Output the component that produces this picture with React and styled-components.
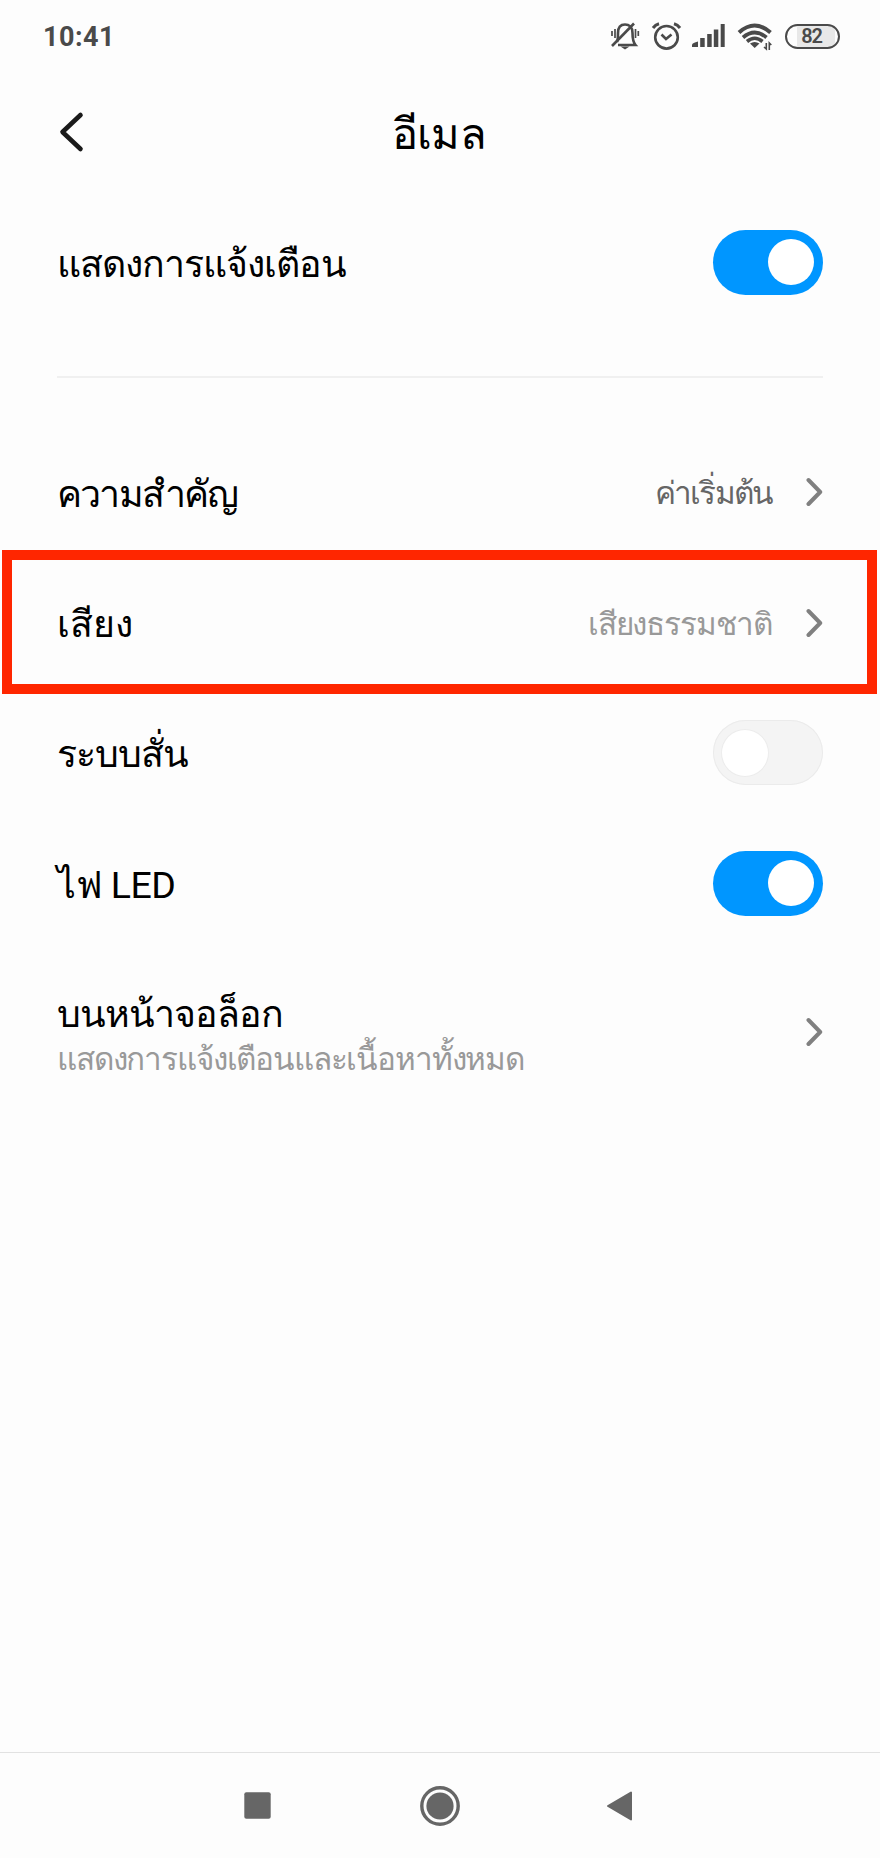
import React from "react";
import styled, { createGlobalStyle } from "styled-components";

const GlobalStyle = createGlobalStyle`
  * { box-sizing: border-box; }
  html, body { margin: 0; padding: 0; background: #fdfdfd; }
  body { font-family: Roboto, sans-serif; }
`;

const Screen = styled.div`
  width: 880px;
  height: 1858px;
  display: flex;
  flex-direction: column;
  background: #fdfdfd;
  overflow: hidden;
`;

const StatusBar = styled.div`
  height: 72px;
  padding: 0 40px 0 43px;
  display: flex;
  align-items: center;
  justify-content: space-between;
`;

const Clock = styled.div`
  font-size: 27px;
  font-weight: 700;
  line-height: 32px;
  letter-spacing: 0.5px;
  padding-top: 2px;
  color: #4a4a4a;
`;

const StatusIcons = styled.div`
  display: flex;
  align-items: center;
  height: 72px;
`;

const Battery = styled.div`
  width: 55px;
  height: 25px;
  padding-right: 2px;
  border: 2.5px solid #4a4a4a;
  border-radius: 13px;
  display: flex;
  align-items: center;
  justify-content: center;
  font-size: 20px;
  font-weight: 600;
  line-height: 20px;
  letter-spacing: -1.2px;
  color: #4a4a4a;
  background: linear-gradient(90deg, transparent 20%, #e8e8e8 20%, #e8e8e8 94%, transparent 94%);
`;

const Header = styled.header`
  height: 125px;
  padding: 0 57px;
  display: grid;
  grid-template-columns: 60px 1fr 60px;
  align-items: center;
`;

const BackButton = styled.button`
  border: 0;
  padding: 0 0 5px;
  background: none;
  display: flex;
`;

const Title = styled.h1`
  margin: 0;
  padding-right: 2px;
  text-align: center;
  font-size: 43.5px;
  font-weight: 400;
  line-height: 60px;
  letter-spacing: -0.8px;
  color: #000;
`;

const Section = styled.section`
  padding: 0 57px;
  display: flex;
  flex-direction: column;
`;

const Divider = styled.hr`
  width: 766px;
  height: 2px;
  border: 0;
  margin: 49px 57px;
  background: #f0f0f0;
`;

const Row = styled.div`
  position: relative;
  height: ${(p) => p.$height || 130.4}px;
  display: flex;
  align-items: center;
  justify-content: space-between;
`;

const Highlight = styled.div`
  position: absolute;
  left: -55px;
  top: -7.4px;
  width: 875px;
  height: 144px;
  border: 10px solid #ff2600;
`;

const Labels = styled.div`
  display: flex;
  flex-direction: column;
  padding-top: 5px;
`;

const Label = styled.span`
  padding-top: 3px;
  font-size: 37.5px;
  line-height: 46px;
  letter-spacing: ${(p) => p.$tracking || 0}px;
  color: #000;
  white-space: nowrap;
`;

const Description = styled.span`
  padding-top: 1px;
  font-size: 31.5px;
  line-height: 44px;
  letter-spacing: -1.15px;
  color: #999;
  white-space: nowrap;
`;

const Trailing = styled.div`
  display: flex;
  align-items: center;
  gap: 34px;
`;

const Value = styled.span`
  padding-top: 4px;
  font-size: 31.5px;
  line-height: 44px;
  letter-spacing: ${(p) => p.$tracking || 0}px;
  white-space: nowrap;
  color: ${(p) => (p.$muted ? "#999" : "#666")};
`;

const Switch = styled.div`
  width: 110.5px;
  height: 65px;
  padding: 0 9.5px;
  border-radius: 33px;
  display: flex;
  align-items: center;
  justify-content: ${(p) => (p.$on ? "flex-end" : "flex-start")};
  background: ${(p) => (p.$on ? "#0096ff" : "#f4f4f4")};
  box-shadow: ${(p) => (p.$on ? "none" : "inset 0 0 0 1px #ebebeb")};
`;

const Knob = styled.div`
  width: 46px;
  height: 46px;
  border-radius: 50%;
  background: #fff;
  box-shadow: ${(p) => (p.$on ? "none" : "0 0 0 1px #ececec")};
`;

const NavBar = styled.nav`
  margin-top: auto;
  height: 106px;
  border-top: 1px solid #e2e2e2;
  padding: 0 244px;
  display: flex;
  align-items: center;
  justify-content: space-between;
`;

const Chevron = () => (
  <svg width="17" height="30" viewBox="0 0 17 30" fill="none" stroke="#808080" strokeWidth="4" strokeLinecap="round" strokeLinejoin="round">
    <path d="M2.5 3 L14.2 15 L2.5 27" />
  </svg>
);

const Toggle = ({ on }) => (
  <Switch $on={on} role="switch" aria-checked={on}>
    <Knob $on={on} />
  </Switch>
);

const StatusGlyphs = () => (
  <svg width="178" height="40" viewBox="607 16 178 40" fill="none" stroke="#4a4a4a" strokeWidth="2.6">
    <path d="M617 42 C618 40 618 36 618 33 C618 27 621 24.500 625 24.500 C629 24.500 632.500 27 632.500 33 C632.500 39 633 42 635.500 45 H618" />
    <path d="M612 46 L634 23.500" />
    <path d="M620.500 46.500 H629.500 L625 49.500 Z" fill="#4a4a4a" stroke="none" />
    <path d="M615 29 V38 M612 31 V36 M635.500 29 V38 M638.300 31 V36" strokeWidth="1.700" />
    <circle cx="666.500" cy="37.300" r="11.300" />
    <path d="M661.500 34.500 L666 39 L671.500 34.500" />
    <path d="M653 28 C654.500 26 656.500 24.500 659 23.800 M680 28 C678.500 26 676.500 24.500 674 23.800" strokeWidth="3" />
    <g fill="#4a4a4a" stroke="none">
      <path d="M692 47 V44.500 Q692.500 43 698 41.500 V47 Z" />
      <rect x="700.200" y="38" width="4.500" height="9" />
      <rect x="707.200" y="34" width="4.500" height="13" />
      <rect x="713.800" y="29.500" width="4.500" height="17.500" />
      <rect x="720.700" y="24" width="4" height="23" />
      <path d="M750 43.500 Q754.500 40.500 759.500 43.500 L754.700 48 Z" />
    </g>
    <path d="M739 32.500 Q754.500 18.500 770.500 32.500" strokeWidth="4" />
    <path d="M743 37.500 Q754.700 27.500 766.500 37.500" strokeWidth="3.800" />
    <path d="M747 41.500 Q754.700 35 762.500 41.500" strokeWidth="3.600" />
    <path d="M766.300 43 V49 L764 47 M769.300 50 V43 L771.300 45" strokeWidth="1.600" />
  </svg>
);

export default function App() {
  return (
    <>
      <GlobalStyle />
      <Screen>
        <StatusBar>
          <Clock>10:41</Clock>
          <StatusIcons>
            <StatusGlyphs />
            <Battery>82</Battery>
          </StatusIcons>
        </StatusBar>
        <Header>
          <BackButton aria-label="ย้อนกลับ">
            <svg width="28" height="42" viewBox="0 0 28 42" fill="none" stroke="#1a1a1a" strokeWidth="4.600" strokeLinecap="round" strokeLinejoin="round">
              <path d="M23.500 4 L5.500 21 L23.500 38" />
            </svg>
          </BackButton>
          <Title>อีเมล</Title>
        </Header>
        <Section>
          <Row $height={130}>
            <Label $tracking={-1}>แสดงการแจ้งเตือน</Label>
            <Toggle on />
          </Row>
        </Section>
        <Divider />
        <Section>
          <Row>
            <Label $tracking={-1.8}>ความสำคัญ</Label>
            <Trailing>
              <Value $tracking={-1.85}>ค่าเริ่มต้น</Value>
              <Chevron />
            </Trailing>
          </Row>
          <Row>
            <Label>เสียง</Label>
            <Trailing>
              <Value $muted $tracking={-1.06}>เสียงธรรมชาติ</Value>
              <Chevron />
            </Trailing>
            <Highlight />
          </Row>
          <Row>
            <Label $tracking={-1.1}>ระบบสั่น</Label>
            <Toggle on={false} />
          </Row>
          <Row>
            <Label $tracking={-0.5}>ไฟ LED</Label>
            <Toggle on />
          </Row>
          <Row $height={167}>
            <Labels>
              <Label $tracking={-1.05}>บนหน้าจอล็อก</Label>
              <Description>แสดงการแจ้งเตือนและเนื้อหาทั้งหมด</Description>
            </Labels>
            <Chevron />
          </Row>
        </Section>
        <NavBar>
          <svg width="30" height="27" viewBox="0 0 30 27"><rect x="0.300" y="0.300" width="26.400" height="26.400" rx="2" fill="#666" /></svg>
          <svg width="42" height="42" viewBox="0 0 42 42">
            <circle cx="21" cy="21" r="18.200" fill="none" stroke="#666" strokeWidth="3.400" />
            <circle cx="21" cy="21" r="13.600" fill="#666" />
          </svg>
          <svg width="30" height="32" viewBox="0 0 30 32"><path d="M25 2.500 V29.500 L2 16 Z" fill="#666" stroke="#666" strokeWidth="2" strokeLinejoin="round" /></svg>
        </NavBar>
      </Screen>
    </>
  );
}
